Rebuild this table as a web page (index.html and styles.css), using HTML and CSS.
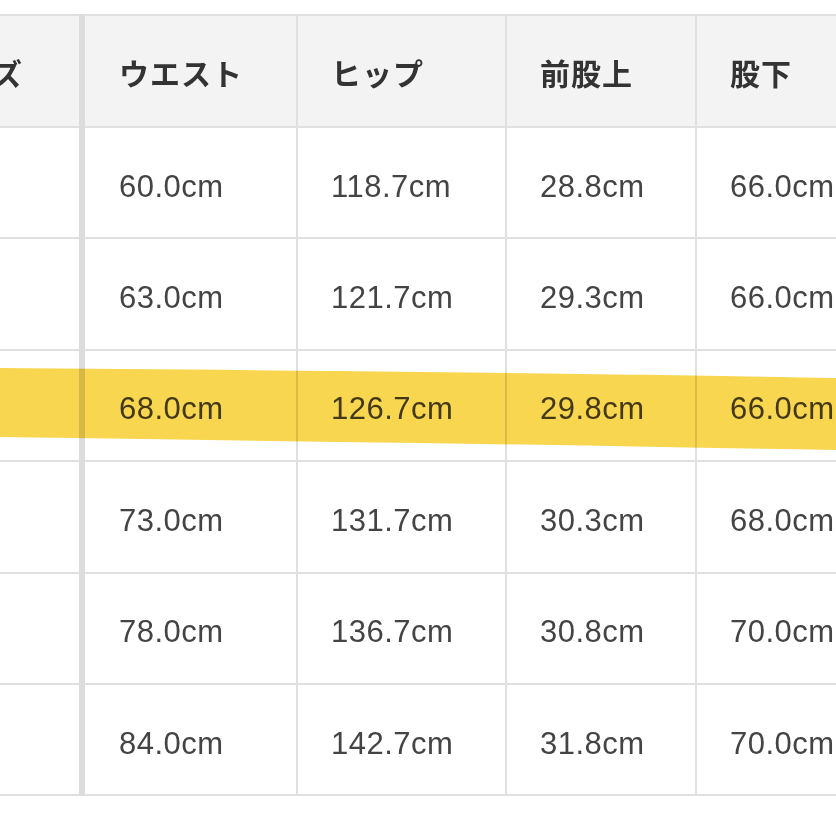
FILE: index.html
```html
<!DOCTYPE html>
<html lang="ja">
<head>
<meta charset="utf-8">
<link rel="stylesheet" href="styles.css">
</head>
<body>
<div class="wrap">
  <table class="size-table">
    <colgroup>
      <col class="c1"><col class="c2"><col class="c3"><col class="c4"><col class="c5">
    </colgroup>
    <thead>
      <tr>
        <th class="first">サイズ</th>
        <th class="second">ウエスト</th>
        <th>ヒップ</th>
        <th>前股上</th>
        <th>股下</th>
      </tr>
    </thead>
    <tbody>
      <tr><td class="first"></td><td class="second">60.0cm</td><td>118.7cm</td><td>28.8cm</td><td>66.0cm</td></tr>
      <tr><td class="first"></td><td class="second">63.0cm</td><td>121.7cm</td><td>29.3cm</td><td>66.0cm</td></tr>
      <tr><td class="first"></td><td class="second">68.0cm</td><td>126.7cm</td><td>29.8cm</td><td>66.0cm</td></tr>
      <tr><td class="first"></td><td class="second">73.0cm</td><td>131.7cm</td><td>30.3cm</td><td>68.0cm</td></tr>
      <tr><td class="first"></td><td class="second">78.0cm</td><td>136.7cm</td><td>30.8cm</td><td>70.0cm</td></tr>
      <tr><td class="first"></td><td class="second">84.0cm</td><td>142.7cm</td><td>31.8cm</td><td>70.0cm</td></tr>
    </tbody>
  </table>
  <svg class="marker" width="836" height="100" viewBox="0 0 836 100" aria-hidden="true">
    <path d="M0 13 C120 14 260 15 420 17 C600 19 720 21 836 23 L836 95 C700 93 560 90 420 88 C280 86 140 84 0 82 Z" fill="#f9d64f"/>
  </svg>
</div>
</body>
</html>
```
FILE: styles.css
```css
html, body {
  margin: 0;
  padding: 0;
  background: #ffffff;
  overflow: hidden;
}
body {
  width: 836px;
  height: 836px;
}
.wrap {
  position: relative;
  width: 836px;
  height: 836px;
  padding-top: 14px;
  box-sizing: border-box;
  overflow: hidden;
}
.size-table {
  border-collapse: collapse;
  table-layout: fixed;
  width: 1091px;
  margin-left: -96px;
  font-family: "Liberation Sans", Arial, "Noto Sans CJK JP", sans-serif;
}
.c1 { width: 177px; }
.c2 { width: 215px; }
.c3 { width: 209px; }
.c4 { width: 190px; }
.c5 { width: 300px; }
.size-table th,
.size-table td {
  border: 2px solid #e0e0e0;
  text-align: left;
  vertical-align: middle;
  padding: 0 0 0 33px;
  white-space: nowrap;
  overflow: hidden;
}
.size-table th {
  height: 112px;
  background: #f3f3f3;
  color: #333333;
  font-family: "Noto Sans CJK JP", sans-serif;
  font-weight: 700;
  font-size: 30px;
  letter-spacing: 1px;
  padding-top: 2px;
  box-sizing: border-box;
}
.size-table td {
  height: 111.4px;
  color: #444444;
  font-size: 31px;
  letter-spacing: 0.5px;
  padding-top: 8px;
  box-sizing: border-box;
}
.size-table .first {
  border-right: 6px solid #dcdcdc;
  padding-left: 25px;
}
.size-table .second {
  padding-left: 34px;
}
.marker {
  position: absolute;
  left: 0;
  top: 355px;
  mix-blend-mode: multiply;
  pointer-events: none;
}
```
